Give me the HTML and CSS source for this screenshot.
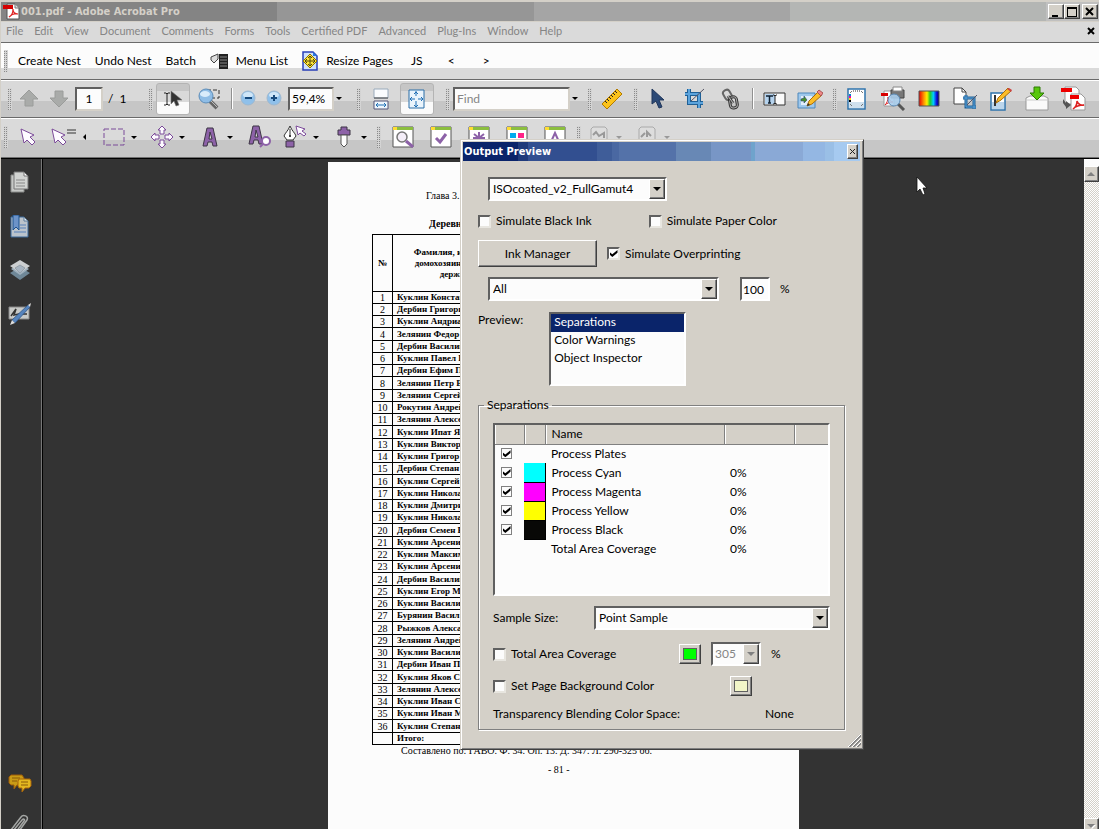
FILE: index.html
```html
<!DOCTYPE html>
<html lang="en">
<head>
  <meta charset="UTF-8">
  <title>001.pdf - Adobe Acrobat Pro</title>
  <meta name="viewport" content="width=device-width, initial-scale=1.0">
  <link rel="stylesheet" href="styles.css">
</head>
<body>
  <header class="titlebar">
    <svg class="app-icon" width="17" height="17" viewBox="0 0 17 17"><path d="M4 1h8l4 4v11H4z" fill="#fff" stroke="#555"/><path d="M12 1v4h4" fill="#ddd" stroke="#777"/><path d="M0 2h10v4H0z" fill="#d40000"/><path d="M6 14c2-1 4-4 4-8 0 3 2 5 5 5-3-1-6 0-9 3z" fill="none" stroke="#d22" stroke-width="1.2"/></svg>
    <h1>001.pdf - Adobe Acrobat Pro</h1>
    <div class="window-buttons">
      <button class="win-btn" aria-label="Minimize"><svg width="12" height="12"><path d="M2 9h6v2H2z"/></svg></button>
      <button class="win-btn" aria-label="Maximize"><svg width="12" height="12"><path d="M1 1h10v10H1z M2 3v7h8V3z" fill-rule="evenodd"/></svg></button>
      <button class="win-btn win-close" aria-label="Close"><svg width="12" height="12"><path d="M2 2l7 7M9 2l-7 7" stroke="#000" stroke-width="2"/></svg></button>
    </div>
  </header>

  <nav class="menubar">
    <a href="#">File</a>
    <a href="#">Edit</a>
    <a href="#">View</a>
    <a href="#">Document</a>
    <a href="#">Comments</a>
    <a href="#">Forms</a>
    <a href="#">Tools</a>
    <a href="#">Certified PDF</a>
    <a href="#">Advanced</a>
    <a href="#">Plug-Ins</a>
    <a href="#">Window</a>
    <a href="#">Help</a>
    <button class="doc-close" aria-label="Close document"><svg width="8" height="8"><path d="M1 1l6 6M7 1l-6 6" stroke="#000" stroke-width="2"/></svg></button>
  </nav>

  <div class="toolbar nest-bar">
    <span class="grip"></span>
    <button class="text-tool">Create Nest</button>
    <button class="text-tool">Undo Nest</button>
    <button class="text-tool">Batch</button>
    <button class="text-tool">
      <svg width="18" height="17"><path d="M1 4l7-3v5l-4 4-3-3z" fill="#ddd" stroke="#444"/><path d="M9 1h9v15H9z" fill="#222"/><path d="M10 4h7M10 7h7M10 10h7M10 13h7" stroke="#888"/></svg>
      Menu List
    </button>
    <button class="text-tool">
      <svg width="16" height="20"><path d="M1 1h10l4 4v14H1z" fill="#cfe0fa" stroke="#2a3fb8" stroke-width="1.5"/><path d="M11 1v4h4z" fill="#2b7de0"/><path d="M8 3l7 7-7 7-7-7z" fill="#ffe53a" stroke="#8a7400"/><path d="M8 5v10M3 10h10M6 7l2-2 2 2M6 13l2 2 2-2M5 8l-2 2 2 2M11 8l2 2-2 2" fill="none" stroke="#54480a"/></svg>
      Resize Pages
    </button>
    <button class="text-tool js-tool">JS</button>
    <button class="text-tool arrow-tool">&lt;</button>
    <button class="text-tool arrow-tool">&gt;</button>
  </div>

  <div class="toolbar main-bar">
    <div class="group">
      <span class="grip"></span>
      <button class="tool tool-nav" aria-label="Previous page"><svg width="20" height="19"><path d="M10 1l9 9h-5v7H6v-7H1z" fill="#a9aba9" stroke="#9a9c9a"/></svg></button>
      <button class="tool tool-nav" aria-label="Next page"><svg width="20" height="19"><path d="M10 18l9-9h-5V2H6v7H1z" fill="#a9aba9" stroke="#9a9c9a"/></svg></button>
      <input class="field page-field" type="text" value="1" aria-label="Page">
      <span class="page-count">/&nbsp; 1</span>
    </div>
    <div class="group">
      <span class="grip"></span>
      <button class="tool tool-on" aria-label="Select"><svg width="20" height="20"><path d="M1 4h2l1 1 1-1h2M4 5v10M1 16h2l1-1 1 1h2" fill="none" stroke="#222"/><path d="M8 2v13l3-3 2 5 3-1-2-5h5z" fill="#333" stroke="#777" stroke-width=".6"/></svg></button>
      <button class="tool" aria-label="Marquee zoom"><svg width="24" height="22"><path d="M10 2h12v8H10z" fill="none" stroke="#333" stroke-dasharray="4 2"/><path d="M13 13l7 7" stroke="#666" stroke-width="4"/><path d="M14 13l6 6" stroke="#bbb"/><circle cx="9" cy="8" r="7" fill="#8fbde6" stroke="#5d8dba"/><ellipse cx="8" cy="6" rx="5" ry="3" fill="#d9ecfb"/></svg></button>
      <span class="sep"></span>
      <button class="tool tool-small" aria-label="Zoom out"><svg width="17" height="17"><circle cx="8" cy="8" r="7" fill="#8fc0ea" stroke="#9db8d0"/><ellipse cx="8" cy="5" rx="5" ry="3" fill="#cfe6f8"/><path d="M5 7h7v2H5z" fill="#174a7d"/></svg></button>
      <button class="tool tool-small" aria-label="Zoom in"><svg width="17" height="17"><circle cx="8" cy="8" r="7" fill="#8fc0ea" stroke="#9db8d0"/><ellipse cx="8" cy="5" rx="5" ry="3" fill="#cfe6f8"/><path d="M5 7h2V5h2v2h2v2H9v2H7V9H5z" fill="#174a7d"/></svg></button>
      <input class="field zoom-field" type="text" value="59,4%" aria-label="Zoom">
      <button class="caret" aria-label="Zoom levels"></button>
    </div>
    <div class="group">
      <span class="grip"></span>
      <button class="tool" aria-label="Scrolling pages"><svg width="18" height="22"><path d="M2 1h14v9H2z" fill="#fafcfe" stroke="#9ab"/><path d="M2 10h14" stroke="#444"/><path d="M2 13h14v8H2z" fill="#eef6fd" stroke="#557"/><path d="M4 17h10M6 15l-2 2 2 2M12 15l2 2-2 2" fill="none" stroke="#1f6fb5"/></svg></button>
      <button class="tool tool-on" aria-label="One full page"><svg width="18" height="22"><path d="M1 2h15v18H1z" fill="#eaf4fc" stroke="#2b6ea8"/><path d="M8 3v5M8 13v6M2 11h5M10 11h5M6 6l2-2 2 2M6 17l2 2 2-2M4 9l-2 2 2 2M13 9l2 2-2 2" fill="none" stroke="#1f6fb5"/></svg></button>
    </div>
    <div class="group">
      <span class="grip"></span>
      <input class="field find-field" type="text" placeholder="Find" aria-label="Find">
      <button class="caret" aria-label="Find options"></button>
    </div>
    <div class="group">
      <span class="grip"></span>
      <button class="tool" aria-label="Measure"><svg width="22" height="22"><path d="M1 16L16 1l5 5L6 21z" fill="#fcc31b" stroke="#b27b00"/><path d="M4 13l2 2M6 11l2 2M8 9l2 2M10 7l2 2M12 5l2 2M14 3l2 2" stroke="#222"/></svg></button>
    </div>
    <div class="group">
      <span class="grip"></span>
      <button class="tool" aria-label="Select object"><svg width="14" height="21"><path d="M1 1v15l4-3 3 7 3-1-3-7h5z" fill="#2c4a77" stroke="#20365a"/></svg></button>
      <button class="tool" aria-label="Crop"><svg width="21" height="21"><path d="M5 1v14h14M1 6h14v14" fill="none" stroke="#1f6096" stroke-width="4"/><path d="M5 1v14h14M1 6h14v14" fill="none" stroke="#5ba3dc" stroke-width="2"/><path d="M7 13L20 1" stroke="#556"/></svg></button>
      <button class="tool" aria-label="Link"><svg width="18" height="22"><rect x="3" y="2" width="7" height="10" rx="3" transform="rotate(-30 6 7)" fill="none" stroke="#666" stroke-width="2"/><rect x="9" y="9" width="7" height="11" rx="3" transform="rotate(-10 12 15)" fill="none" stroke="#333" stroke-width="3"/><rect x="9" y="9" width="7" height="11" rx="3" transform="rotate(-10 12 15)" fill="none" stroke="#aaa"/><path d="M7 8l5 7" stroke="#444" stroke-width="3"/><path d="M7 8l5 7" stroke="#bbb"/></svg></button>
      <span class="sep"></span>
      <button class="tool" aria-label="Text field"><svg width="23" height="14"><path d="M1 1h21v12H1z" fill="#fafafa" stroke="#333"/><path d="M2 2h10v10H2z" fill="#b5d3ee"/><path d="M3 4h7M6.500 4v7M5 11h3" stroke="#123" stroke-width="1.500"/><path d="M10 3h1l1 1 1-1h1M12 4v7M10 12h1l1-1 1 1h1" fill="none" stroke="#222"/></svg></button>
      <button class="tool" aria-label="Edit picture"><svg width="26" height="20"><path d="M1 4h17v15H1z" fill="#9fc8ec" stroke="#4c87bb"/><path d="M4 7h11v9H4z" fill="#e3eefa"/><path d="M4 10l3-1v-2l3 4-3 3v-2H4z" fill="#4a8f28" stroke="#2c4a77" stroke-width=".6"/><path d="M10 17l2-5L21 3l4 3-10 9z" fill="#fbbd28" stroke="#a96c0a"/><path d="M20 3l2-2 4 3-2 3z" fill="#e88" stroke="#a55"/><path d="M10 17l1-3 2 2z" fill="#333"/></svg></button>
    </div>
    <div class="group">
      <span class="grip"></span>
      <button class="tool" aria-label="Printer marks"><svg width="20" height="22"><path d="M1 1h17v20H1z" fill="#fff" stroke="#2f74ad" stroke-width="1.500"/><path d="M2 14h15v6H2z" fill="#cfe0ee"/><path d="M6 3h7" stroke="#333" stroke-dasharray="1 1"/><path d="M3 5l2-2M14 3l2 2M3 16l2 2M16 16l-2 2" stroke="#777"/><path d="M2 6h2v2H2z" fill="#08c"/><path d="M2 8h2v2H2z" fill="#e0a"/><path d="M2 10h2v2H2z" fill="#fd0"/><path d="M2 12h2v2H2z"/></svg></button>
      <button class="tool" aria-label="Print production"><svg width="26" height="25"><path d="M4 5h10v15H4z" fill="#fff" stroke="#999"/><path d="M11 4h13v8H11z" fill="#777" stroke="#444"/><path d="M13 1h9v4h-9z" fill="#fff" stroke="#888"/><path d="M1 7h7v3H1z" fill="#d80000"/><path d="M5 19c2-2 3-5 3-8 1 3 3 5 5 5-3 0-6 1-8 3z" fill="none" stroke="#d22"/><path d="M18 18l6 6" stroke="#555" stroke-width="3"/><circle cx="14" cy="14" r="6" fill="#a8cdec" fill-opacity=".9" stroke="#5c8ab5"/></svg></button>
      <button class="tool" aria-label="Output preview"><svg width="23" height="17"><defs><linearGradient id="spectrum"><stop offset="0" stop-color="#e00"/><stop offset=".25" stop-color="#f90"/><stop offset=".4" stop-color="#fe0"/><stop offset=".55" stop-color="#2c2"/><stop offset=".72" stop-color="#0cf"/><stop offset=".88" stop-color="#11d"/><stop offset="1" stop-color="#006"/></linearGradient></defs><path d="M1 1h20v15H1z" fill="url(#spectrum)" stroke="#555"/></svg></button>
      <button class="tool" aria-label="Crop pages"><svg width="25" height="24"><path d="M1 1h8l4 4v12H1z" fill="#fff" stroke="#444"/><path d="M9 1v4h4" fill="none" stroke="#444"/><path d="M13 8v12h10M10 11h11v11" fill="none" stroke="#1f6096" stroke-width="3"/><path d="M13 8v12h10M10 11h11v11" fill="none" stroke="#5ba3dc"/><path d="M14 18L24 8" stroke="#556"/></svg></button>
      <button class="tool" aria-label="Fix hairlines"><svg width="23" height="24"><path d="M1 6h14v17H1z" fill="#fff" stroke="#2f74ad" stroke-width="1.500"/><path d="M2 15h12v7H2z" fill="#bcd6ec"/><path d="M5 8v11" stroke="#333" stroke-width="2"/><path d="M6 16l2-5L18 1l3 3-10 9z" fill="#fbbd28" stroke="#a96c0a"/><path d="M17 2l2-1 3 2-1 2z" fill="#c44"/></svg></button>
      <button class="tool" aria-label="Export"><svg width="24" height="25"><path d="M1 12l4-2h14l4 2v12H1z" fill="#fafafa" stroke="#999"/><path d="M2 14h20" stroke="#ccc"/><path d="M9 1h6v6h4l-7 7-7-7h4z" fill="#58c70d" stroke="#2c7a04"/></svg></button>
      <button class="tool" aria-label="Convert"><svg width="25" height="25"><path d="M4 1h11l3 3v14H4z" fill="#fff" stroke="#999"/><path d="M10 8h10l4 4v12H10z" fill="#fff" stroke="#999"/><path d="M0 2h11v4H0z" fill="#e00"/><path d="M9 9h9v4H9z" fill="#e00"/><path d="M12 23c3-2 4-5 4-8 1 3 4 5 7 4-4 0-8 1-11 4z" fill="none" stroke="#d22" stroke-width="1.500"/><path d="M2 13v4l3 4v2l5-4-5-4v2z" fill="#555"/></svg></button>
    </div>
  </div>

  <div class="toolbar edit-bar">
    <div class="group">
      <span class="grip"></span>
      <button class="tool" aria-label="Selection"><svg width="18" height="18"><path d="M2 1l3 14 3-3 5 5 3-3-5-5 4-2z" fill="#fdfbff" stroke="#7b4a99"/></svg></button>
      <button class="tool" aria-label="Similar objects"><svg width="26" height="18"><path d="M1 1l3 14 3-3 5 5 3-3-5-5 4-2z" fill="#fdfbff" stroke="#7b4a99"/><path d="M16 2h9M16 5h9" stroke="#333"/></svg></button>
      <button class="caret caret-left" aria-label="Previous tool"></button>
    </div>
    <div class="group">
      <button class="tool" aria-label="Frame"><svg width="22" height="18"><path d="M1 1h20v16H1z" fill="none" stroke="#7b4a99" stroke-dasharray="5 2"/></svg></button>
      <button class="caret" aria-label="Frame options"></button>
      <button class="tool" aria-label="Move"><svg width="24" height="24"><path d="M12 1l4 4h-2v4h-4V5H8zM12 23l4-4h-2v-4h-4v4H8zM1 12l4-4v2h4v4H5v2zM23 12l-4-4v2h-4v4h4v2z" fill="#fdfbff" stroke="#7b4a99"/></svg></button>
      <button class="caret" aria-label="Move options"></button>
      <button class="tool" aria-label="Text edit"><svg width="16" height="20"><path d="M5 1h6l4 18h-4l-1-4H6l-1 4H1zM7 12h3L8 5z" fill="#8d62a8" stroke="#3d3545" fill-rule="evenodd"/></svg></button>
      <button class="caret" aria-label="Text options"></button>
      <button class="tool tool-wide" aria-label="Text search"><svg width="24" height="24"><path d="M5 1h6l4 18h-4l-1-4H6l-1 4H1zM7 12h3L8 5z" fill="#8d62a8" stroke="#3d3545" fill-rule="evenodd"/><circle cx="18" cy="16" r="4" fill="#fff" stroke="#8d62a8" stroke-width="2"/><path d="M15 19l-3 3" stroke="#8d62a8" stroke-width="2"/></svg></button>
      <button class="tool" aria-label="Path edit"><svg width="26" height="24"><path d="M7 1c-2 5-5 7-6 10l3 4h6l3-4C12 8 9 6 7 1z" fill="#fff" stroke="#333"/><path d="M7 4v6" stroke="#333"/><circle cx="7" cy="11" r="1"/><path d="M3 16h8v6H3z" fill="#8d62a8" stroke="#3d3545"/><path d="M13 1l2 9 2-2 4 3 2-2-4-3 3-2z" fill="#fdfbff" stroke="#7b4a99"/></svg></button>
      <button class="caret" aria-label="Path options"></button>
      <button class="tool" aria-label="Pipette"><svg width="15" height="22"><path d="M4 1h6v3h3v5H1V4h3z" fill="#8d62a8" stroke="#3d3545"/><path d="M4 9h6v9l-3 3-3-3z" fill="#fdfdfd" stroke="#555"/></svg></button>
      <button class="caret" aria-label="Pipette options"></button>
    </div>
    <div class="group panel-tools">
      <span class="grip"></span>
      <button class="tool" aria-label="Inspect"><svg width="22" height="22"><path d="M1 1h20v20H1z" fill="#fff" stroke="#555"/><path d="M1 1h20v3H1z" fill="#8cbf3f"/><path d="M1 1h4v3H1z" fill="#fd3"/><circle cx="10" cy="11" r="5" fill="#f4eef8" stroke="#777" stroke-width="1.500"/><path d="M14 15l7 6" stroke="#8d62a8" stroke-width="3"/></svg></button>
      <button class="tool" aria-label="Preflight"><svg width="22" height="22"><path d="M1 1h20v20H1z" fill="#fff" stroke="#555"/><path d="M1 1h20v3H1z" fill="#8cbf3f"/><path d="M1 1h4v3H1z" fill="#fd3"/><path d="M6 12l4 4 6-8" fill="none" stroke="#8d62a8" stroke-width="3"/></svg></button>
      <button class="tool" aria-label="Action list"><svg width="22" height="22"><path d="M1 1h20v20H1z" fill="#fff" stroke="#555"/><path d="M1 1h20v3H1z" fill="#8cbf3f"/><path d="M1 1h4v3H1z" fill="#fd3"/><path d="M11 6v12M6 8l10 8M16 8L6 16M5 12h12" stroke="#8d62a8" stroke-width="2"/></svg></button>
      <button class="tool" aria-label="Color"><svg width="22" height="22"><path d="M1 1h20v20H1z" fill="#fff" stroke="#555"/><path d="M1 1h20v3H1z" fill="#8cbf3f"/><path d="M1 1h4v3H1z" fill="#fd3"/><path d="M4 7h6v5H4z" fill="#0ae"/><path d="M12 7h6v5h-6z" fill="#f28"/><path d="M4 13h6v5H4z" fill="#fd0"/><path d="M12 13h6v5h-6z"/></svg></button>
      <button class="tool" aria-label="Fonts"><svg width="22" height="22"><path d="M1 1h20v20H1z" fill="#fff" stroke="#555"/><path d="M1 1h20v3H1z" fill="#8cbf3f"/><path d="M1 1h4v3H1z" fill="#fd3"/><path d="M6 18l5-11 5 11M8 14h6" fill="none" stroke="#8d62a8" stroke-width="2"/></svg></button>
    </div>
    <div class="group disabled-tools">
      <span class="grip"></span>
      <button class="tool" aria-label="Stamp"><svg width="18" height="22"><path d="M1 3l2-2h12l2 2v18H1z" fill="#ddd" stroke="#aaa"/><path d="M3 9l3-3 3 4 5-3v5" fill="none" stroke="#999" stroke-width="2"/></svg></button>
      <button class="caret" aria-label="Stamp options"></button>
      <button class="tool" aria-label="Note"><svg width="18" height="22"><path d="M1 3l2-2h12l2 2v18H1z" fill="#ddd" stroke="#aaa"/><path d="M3 11l4-4M9 11V6l4 4" fill="none" stroke="#999" stroke-width="2"/></svg></button>
      <button class="caret" aria-label="Note options"></button>
    </div>
  </div>

  <main class="viewer">
    <aside class="sidebar">
      <button class="side-btn" aria-label="Pages"><svg width="20" height="23"><path d="M1 4h13v17H1z" fill="#c6c8c6" stroke="#8a8c8a"/><path d="M4 1h10l4 4v13H4z" fill="#d2d4d2" stroke="#777"/><path d="M14 1v4h4z" fill="#fff" stroke="#777"/><path d="M6 9h9M6 12h9M6 15h9" stroke="#888"/></svg></button>
      <button class="side-btn" aria-label="Bookmarks"><svg width="20" height="23"><path d="M1 2h13l4 4v16H1z" fill="#bcc4cc" stroke="#3a689a"/><path d="M14 2v4h4z" fill="#e8eef4" stroke="#5a7a9a"/><path d="M10 10h6M10 13h6M4 17h12" stroke="#5681bb"/><path d="M3 0h6v15l-3-3-3 3z" fill="#6c93c8" stroke="#1d528e"/></svg></button>
      <button class="side-btn" aria-label="Layers"><svg width="20" height="22"><path d="M10 8l10 6-10 7L0 14z" fill="#6f8797"/><path d="M10 4l9 6-9 6-9-6z" fill="#9fb0bd"/><path d="M10 1l10 6-10 7L0 7z" fill="#cdd0d2"/><path d="M5 9l5-3 5 3-5 5z" fill="#a8b5c2" stroke="#808b96" stroke-width=".6"/></svg></button>
      <button class="side-btn" aria-label="Signatures"><svg width="24" height="23"><path d="M1 4h20v12H1z" fill="#c8cac8" stroke="#888"/><path d="M3 13l5-7-2 6 5-1h8" fill="none" stroke="#333" stroke-width="1.500"/><path d="M4 17L20 2l2 2L7 20z" fill="#5684bd" stroke="#2f5688" stroke-width=".8"/><path d="M4 17l-2 5 5-2zM20 2l3-2-1 4z" fill="#ddd"/></svg></button>
      <button class="side-btn side-comments" aria-label="Comments"><svg width="24" height="20"><path d="M3 1h11l2 3v5l-2 2H9l-3 4v-4H3L1 9V3z" fill="#c99b16" stroke="#9c5b08"/><path d="M4 4h8M4 7h5" stroke="#8a5a08"/><path d="M11 5h11l1 2v5l-2 2h-4l-3 4v-4h-3l-1-2V7z" fill="#e3b820" stroke="#a8640a"/><path d="M13 8h7M13 11h7" stroke="#8a5a08"/></svg></button>
      <button class="side-btn" aria-label="Attachments"><svg width="22" height="24"><path d="M2 17L12 4c2-3 8-1 6 3L8 21c-2 2-6 0-4-3L13 7c2-2 3 0 2 1l-8 11" fill="none" stroke="#a5a7a5" stroke-width="1.500"/></svg></button>
    </aside>

    <div class="canvas">
      <article class="page" lang="ru">
        <p class="chapter">Глава 3.</p>
        <p class="village">Деревня</p>
        <table class="census">
          <thead>
            <tr><th class="num">№</th><th class="name">Фамилия, имя отчество<br>домохозяина (домохозя-<br>держателя)</th><th></th></tr>
          </thead>
          <tbody>
            <tr><td>1</td><td>Куклин Констан</td><td></td></tr>
            <tr><td>2</td><td>Дербин Григори</td><td></td></tr>
            <tr><td>3</td><td>Куклин Андриа</td><td></td></tr>
            <tr><td>4</td><td>Зелянин Федор</td><td></td></tr>
            <tr><td>5</td><td>Дербин Василий</td><td></td></tr>
            <tr><td>6</td><td>Куклин Павел И</td><td></td></tr>
            <tr><td>7</td><td>Дербин Ефим П</td><td></td></tr>
            <tr><td>8</td><td>Зелянин Петр В</td><td></td></tr>
            <tr><td>9</td><td>Зелянин Сергей</td><td></td></tr>
            <tr><td>10</td><td>Рокутин Андрей</td><td></td></tr>
            <tr><td>11</td><td>Зелянин Алексе</td><td></td></tr>
            <tr><td>12</td><td>Куклин Ипат Я</td><td></td></tr>
            <tr><td>13</td><td>Куклин Виктор</td><td></td></tr>
            <tr><td>14</td><td>Куклин Григор</td><td></td></tr>
            <tr><td>15</td><td>Дербин Степан</td><td></td></tr>
            <tr><td>16</td><td>Куклин Сергей</td><td></td></tr>
            <tr><td>17</td><td>Куклин Никола</td><td></td></tr>
            <tr><td>18</td><td>Куклин Дмитри</td><td></td></tr>
            <tr><td>19</td><td>Куклин Никола</td><td></td></tr>
            <tr><td>20</td><td>Дербин Семен В</td><td></td></tr>
            <tr><td>21</td><td>Куклин Арсени</td><td></td></tr>
            <tr><td>22</td><td>Куклин Максим</td><td></td></tr>
            <tr><td>23</td><td>Куклин Арсени</td><td></td></tr>
            <tr><td>24</td><td>Дербин Василий</td><td></td></tr>
            <tr><td>25</td><td>Куклин Егор М</td><td></td></tr>
            <tr><td>26</td><td>Куклин Васили</td><td></td></tr>
            <tr><td>27</td><td>Бурянин Васил</td><td></td></tr>
            <tr><td>28</td><td>Рыжков Алекса</td><td></td></tr>
            <tr><td>29</td><td>Зелянин Андрей</td><td></td></tr>
            <tr><td>30</td><td>Куклин Васили</td><td></td></tr>
            <tr><td>31</td><td>Дербин Иван П</td><td></td></tr>
            <tr><td>32</td><td>Куклин Яков С</td><td></td></tr>
            <tr><td>33</td><td>Зелянин Алексе</td><td></td></tr>
            <tr><td>34</td><td>Куклин Иван С</td><td></td></tr>
            <tr><td>35</td><td>Куклин Иван М</td><td></td></tr>
            <tr><td>36</td><td>Куклин Степан</td><td></td></tr>
            <tr><td></td><td>Итого:</td><td></td></tr>
          </tbody>
        </table>
        <p class="source">Составлено по: ГАВО. Ф. 34. Оп. 13. Д. 347. Л. 290-325 об.</p>
        <p class="folio">- 81 -</p>
      </article>
    </div>

    <div class="scrollbar">
      <button class="scroll-btn" aria-label="Scroll up"><svg width="9" height="6"><path d="M0 5l4-4 4 4z" fill="#808080"/></svg></button>
      <div class="track"></div>
      <button class="scroll-btn" aria-label="Scroll down"><svg width="9" height="6"><path d="M1 2h8L5 6z" fill="#fff"/><path d="M0 1h8L4 5z" fill="#808080"/></svg></button>
    </div>
  </main>

  <section class="dialog">
    <div class="dialog-title">
      <h2>Output Preview</h2>
      <button class="dialog-close" aria-label="Close"><svg width="7" height="7"><path d="M1 1l5 5M6 1l-5 5" stroke="#222"/></svg></button>
    </div>
    <form class="dialog-body">
      <span class="combo profile"><select aria-label="Simulation profile"><option>ISOcoated_v2_FullGamut4</option></select></span>
      <div class="row checks">
        <label><input type="checkbox"> Simulate Black Ink</label>
        <label><input type="checkbox"> Simulate Paper Color</label>
      </div>
      <div class="row ink-row">
        <button type="button" class="push">Ink Manager</button>
        <label><input type="checkbox" checked> Simulate Overprinting</label>
      </div>
      <div class="row show-row">
        <span class="combo show"><select aria-label="Show"><option>All</option></select></span>
        <input class="field opacity" id="opacity" type="text" value="100">
        <label for="opacity">%</label>
      </div>
      <div class="row preview-row">
        <label for="preview">Preview:</label>
        <select id="preview" class="listbox" size="4">
          <option selected>Separations</option>
          <option>Color Warnings</option>
          <option>Object Inspector</option>
        </select>
      </div>

      <fieldset>
        <legend>Separations</legend>
        <div class="plates">
          <table>
            <colgroup><col class="col-check"><col class="col-ink"><col class="col-name"><col class="col-value"><col></colgroup>
            <thead>
              <tr><th></th><th></th><th>Name</th><th></th><th></th></tr>
            </thead>
            <tbody>
              <tr><td><input type="checkbox" checked aria-label="Process Plates"></td><td></td><td>Process Plates</td><td></td><td></td></tr>
              <tr><td><input type="checkbox" checked aria-label="Process Cyan"></td><td class="ink cyan"></td><td>Process Cyan</td><td>0%</td><td></td></tr>
              <tr><td><input type="checkbox" checked aria-label="Process Magenta"></td><td class="ink magenta"></td><td>Process Magenta</td><td>0%</td><td></td></tr>
              <tr><td><input type="checkbox" checked aria-label="Process Yellow"></td><td class="ink yellow"></td><td>Process Yellow</td><td>0%</td><td></td></tr>
              <tr><td><input type="checkbox" checked aria-label="Process Black"></td><td class="ink black"></td><td>Process Black</td><td>0%</td><td></td></tr>
              <tr><td></td><td></td><td>Total Area Coverage</td><td>0%</td><td></td></tr>
            </tbody>
          </table>
        </div>
        <div class="row sample-row">
          <label for="sample">Sample Size:</label>
          <span class="combo"><select id="sample"><option>Point Sample</option></select></span>
        </div>
        <div class="row coverage-row">
          <label><input type="checkbox"> Total Area Coverage</label>
          <button type="button" class="swatch swatch-green" aria-label="Warning color"></button>
          <span class="combo limit"><select id="limit" disabled><option>305</option></select></span>
          <label for="limit">%</label>
        </div>
        <div class="row background-row">
          <label><input type="checkbox"> Set Page Background Color</label>
          <button type="button" class="swatch swatch-cream" aria-label="Background color"></button>
        </div>
        <div class="row blend-row">
          <span>Transparency Blending Color Space:</span>
          <span>None</span>
        </div>
      </fieldset>
    </form>
    <svg class="resize-grip" width="13" height="13"><path d="M1 13L13 1M5 13l8-8M9 13l4-4" stroke="#808080" stroke-width="2"/><path d="M0 13L13 0M4 13l9-9M8 13l5-5" stroke="#fff"/></svg>
  </section>

  <svg class="pointer" width="12" height="20"><path d="M1 1v15l3-3 3 6 2-1-2-6h4z" fill="#fff" stroke="#111" stroke-width=".8"/></svg>
</body>
</html>
```
FILE: styles.css
```css
*,
*::before,
*::after {
  box-sizing: border-box;
}

body {
  margin: 0;
  height: 100vh;
  display: flex;
  flex-direction: column;
  overflow: hidden;
  border-top: 2px solid #d4d0c8;
  border-left: 1px solid #d4d0c8;
  font: 12px/16px Lato, sans-serif;
  color: #000;
  background: #d4d0c8;
}

button,
input,
select {
  font: inherit;
  color: inherit;
  border-radius: 0;
}

button {
  padding: 0;
  border: 0;
  background: none;
}

svg {
  flex: none;
  display: block;
}

/* title bar */
.titlebar {
  display: flex;
  align-items: center;
  height: 19px;
  padding: 0 1px 0 2px;
  background: linear-gradient(to right, #848484 276px, #969696 276px 533px, #a5a5a5 533px 789px, #b4b6b4 789px 1045px, #c0c0c0 1045px);
}

.titlebar h1,
.dialog-title h2 {
  margin: 0;
  font: bold 11px/19px "DejaVu Sans Condensed", "DejaVu Sans", sans-serif;
  color: #fff;
}

.titlebar h1 {
  flex: 1;
  margin-left: 1px;
  color: #d4d0c8;
}

.window-buttons {
  display: flex;
}

.win-btn,
.dialog-close,
.scroll-btn,
.push,
.swatch {
  display: flex;
  align-items: center;
  justify-content: center;
  background: #d4d0c8;
  border: 1px solid;
  border-color: #fff #404040 #404040 #fff;
  box-shadow: inset -1px -1px 0 #808080;
}

.win-btn {
  width: 16px;
  height: 15px;
}

.win-close {
  margin-left: 2px;
}

/* menu */
.menubar {
  display: flex;
  align-items: center;
  gap: 11px;
  height: 20px;
  padding: 0 4px 2px 5px;
  margin-top: 1px;
  background: #dadada;
  font-size: 11px;
}

.menubar a {
  color: #858585;
  text-decoration: none;
}

.doc-close {
  margin-left: auto;
}

/* toolbars */
.toolbar {
  display: flex;
  align-items: center;
  border-top: 1px solid #6a6a6a;
}

.nest-bar {
  gap: 14px;
  height: 37px;
  padding-left: 3px;
  background: linear-gradient(#fcfcfc 25px, #dadada 25px);
}

.grip {
  flex: none;
  width: 4px;
  height: 22px;
  margin-right: 1px;
  background:
    repeating-linear-gradient(#d4d4d4 0 1px, transparent 1px 2px),
    repeating-linear-gradient(to right, #8a8a8a 0 1px, #d4d4d4 1px 2px);
}

.nest-bar .grip {
  margin-right: -4px;
}

.text-tool {
  display: flex;
  align-items: center;
  gap: 8px;
}

.js-tool {
  margin: 0 4px;
}

.arrow-tool {
  width: 21px;
  justify-content: center;
}

.main-bar {
  display: grid;
  grid-template-columns: 141px 208px 89px 142px 46px 199px 1fr;
  height: 38px;
  padding-left: 7px;
  background: linear-gradient(#fff 1px, #d9d9d9 1px 21px, #c6c6c6 21px);
}

.edit-bar {
  display: grid;
  grid-template-columns: 93px 280px 200px 1fr;
  height: 41px;
  padding: 0 0 1px 3px;
  background: linear-gradient(#fff 1px, #dadada 1px 22px, #c6c6c6 22px);
  border-bottom: 1px solid #707070;
}

.group {
  display: flex;
  align-items: center;
  gap: 2px;
  min-width: 0;
}

.edit-bar .group + .group {
  gap: 0;
}

.edit-bar .panel-tools.group {
  gap: 4px;
}

.tool {
  flex: none;
  display: flex;
  align-items: center;
  justify-content: center;
  width: 34px;
  height: 32px;
}

.tool-nav {
  width: 28px;
}

.tool-small {
  width: 24px;
}

.tool-wide {
  width: 38px;
}

.tool-on {
  border: 1px solid #b4b4b4;
  border-radius: 3px;
  background: linear-gradient(#c6c6c6 7px, #d9d9d9 7px 18px, #fafafa 18px);
}

.sep {
  width: 2px;
  height: 21px;
  margin: 0 1px 0 3px;
  background: linear-gradient(to right, #909090 1px, #fff 1px);
}

.caret {
  flex: none;
  width: 14px;
  height: 14px;
}

.caret::before {
  content: "";
  display: block;
  width: 6px;
  border: 3px solid transparent;
  border-top-color: #000;
  border-bottom: 0;
}

.caret-left::before {
  width: 3px;
  border: 3px solid transparent;
  border-right: 3px solid #000;
  border-left: 0;
}

.disabled-tools .caret::before {
  border-top-color: #999;
}

.field {
  min-width: 0;
  height: 24px;
  padding: 0 2px;
  background: #fcfcfc;
  border: 2px solid;
  border-color: #606060 #d4d0c8 #d4d0c8 #606060;
}

.page-field {
  width: 28px;
  text-align: center;
}

.zoom-field {
  width: 46px;
}

.find-field {
  width: 117px;
}

.field::placeholder {
  color: #858585;
}

.page-count {
  margin-left: 3px;
}

/* viewer */
.viewer {
  flex: 1;
  min-height: 0;
  display: flex;
  background: #333;
  border-top: 1px solid #000;
}

.sidebar {
  flex: none;
  display: flex;
  flex-direction: column;
  gap: 20px;
  width: 42px;
  padding: 11px 3px 0 0;
  border-right: 1px solid #000;
  box-shadow: inset -1px 0 0 #777;
}

.side-btn {
  display: flex;
  align-items: center;
  justify-content: center;
  flex: none;
  height: 24px;
}

.side-comments {
  margin-top: auto;
}

.side-btn:last-child {
  margin: -3px 0 -8px;
}

.canvas {
  flex: 1;
  overflow: hidden;
  padding-top: 3px;
}

.page {
  width: 471px;
  height: 100%;
  margin: 0 auto;
  padding: 28px 44px 0;
  background: #fcfcfc;
  font: 10px/12px "Liberation Serif", serif;
  white-space: nowrap;
}

.page p {
  margin: 0;
}

.chapter {
  padding-left: 54px;
}

.page .village {
  margin: 16px 0 4px;
  padding-left: 57px;
  font-weight: bold;
}

.census {
  width: 100%;
  border-collapse: collapse;
  table-layout: fixed;
}

.census th,
.census td {
  padding: 0 4px;
  border: 1px solid #000;
  font-size: 9px;
  line-height: 11px;
  font-weight: bold;
  text-align: left;
}

.census th {
  height: 57px;
  text-align: center;
}

.census .name {
  width: 140px;
}

.census .num {
  width: 20px;
  padding: 0;
}

.census td:first-child {
  padding: 0;
  font-size: 10px;
  font-weight: normal;
  text-align: center;
}

.census tbody tr {
  height: 12px;
}

.census tbody tr:nth-child(4n) {
  height: 13px;
}

.source {
  padding-left: 29px;
}

.page .folio {
  margin-top: 7px;
  padding-left: 176px;
}

.scrollbar {
  flex: none;
  display: flex;
  flex-direction: column;
  width: 15px;
  padding-top: 7px;
  background: #fcfcfc;
}

.scroll-btn {
  flex: none;
  height: 16px;
}

.scroll-btn:last-child {
  margin-bottom: -5px;
}

.track {
  flex: 1;
  background: repeating-conic-gradient(#d4d0c8 0 25%, #fff 0 50%) 0 0 / 2px 2px;
}

/* dialog */
.dialog {
  position: absolute;
  left: 460px;
  top: 139px;
  width: 404px;
  padding: 1px;
  background: #d4d0c8;
  border: 1px solid;
  border-color: #d4d0c8 #404040 #404040 #d4d0c8;
  box-shadow: inset 1px 1px 0 #fff, inset -1px -1px 0 #808080;
}

.dialog-title {
  display: flex;
  align-items: center;
  justify-content: space-between;
  height: 19px;
  margin: 1px 2px 1px 1px;
  padding: 0 2px 0 1px;
  background: linear-gradient(to right, #0a246a 55px, #1f3a7a 55px 65px, #324f90 65px 134px, #3f5d99 134px 149px, #4a68a2 149px 156px, #5472a9 156px 213px, #6888b5 213px 248px, #7896c6 248px 288px, #6fa3cc 288px 292px, #8aa9d6 292px 340px, #94b7e3 340px 362px, #9abfe6 362px 371px, #a6caf0 371px);
}

.dialog-close {
  width: 11px;
  height: 15px;
}

.dialog-body {
  display: flex;
  flex-direction: column;
  padding: 15px 17px 18px 16px;
}

.row,
.row label {
  display: flex;
  align-items: center;
}

.row label:has(input) {
  gap: 5px;
}

.combo {
  position: relative;
  display: block;
}

.combo select,
.listbox {
  display: block;
  width: 100%;
  height: 24px;
  padding: 0 3px;
  appearance: none;
  background: #fcfcfc;
  border: 2px solid;
  border-color: #606060 #fff #fff #606060;
  outline: 0;
}

.combo select:disabled {
  color: #858585;
  opacity: 1;
  padding: 0 2px;
}

.combo::before {
  content: "";
  position: absolute;
  right: 2px;
  top: 2px;
  width: 16px;
  height: 20px;
  background: #d4d0c8;
  border: 1px solid;
  border-color: #fff #404040 #404040 #fff;
  box-shadow: inset -1px -1px 0 #808080;
  pointer-events: none;
}

.combo::after {
  content: "";
  position: absolute;
  right: 6px;
  top: 10px;
  border: 4px solid transparent;
  border-top-color: #000;
  border-bottom: 0;
  pointer-events: none;
}

.limit::after {
  border-top-color: #808080;
}

input[type="checkbox"] {
  flex: none;
  appearance: none;
  display: grid;
  place-items: center;
  width: 13px;
  height: 13px;
  margin: 0;
  background: #fcfcfc;
  border: 2px solid;
  border-color: #606060 #e8e6e0 #e8e6e0 #606060;
}

input[type="checkbox"]:checked::before {
  content: "";
  width: 8px;
  height: 7px;
  background: #000;
  clip-path: polygon(0 30%, 35% 60%, 100% 0, 100% 40%, 35% 100%, 0 65%);
}

.profile {
  width: 179px;
  margin-left: 10px;
}

.checks {
  gap: 57px;
  margin-top: 12px;
}

.ink-row {
  gap: 10px;
  margin-top: 11px;
}

.push {
  width: 119px;
  height: 27px;
}

.show-row {
  margin: 10px 0 0 10px;
}

.show {
  width: 231px;
  margin-right: 21px;
}

.opacity {
  width: 30px;
  margin-right: 10px;
  padding: 0 1px;
  border-color: #606060 #fff #fff #606060;
}

.row.preview-row {
  align-items: flex-start;
  gap: 26px;
  margin-top: 11px;
}

.listbox {
  width: 137px;
  height: 74px;
  padding: 0;
  overflow: hidden;
}

.listbox option {
  height: 18px;
  min-height: 18px;
  padding: 0 3px;
  line-height: 18px;
}

.listbox option:checked {
  color: #fff;
  background: #0a246a linear-gradient(#0a246a, #0a246a);
  -webkit-text-fill-color: #fff;
}

fieldset {
  min-width: 0;
  margin: 11px 0 0;
  padding: 10px 14px 7px;
  border: 1px solid #808080;
  box-shadow: inset 1px 1px 0 #fff, 1px 1px 0 #fff;
}

legend {
  margin-left: -9px;
  padding: 0 3px;
}

.plates {
  height: 173px;
  background: #fcfcfc;
  border: 2px solid;
  border-color: #606060 #fff #fff #606060;
}

.plates table {
  width: 100%;
  border-collapse: collapse;
  table-layout: fixed;
}

.plates th {
  height: 19px;
  padding: 0 6px;
  background: #d4d0c8;
  border-right: 1px solid #808080;
  border-bottom: 1px solid #808080;
  box-shadow: inset 1px 0 0 #fff;
  font-weight: normal;
  text-align: left;
}

.plates th:last-child {
  border-right: 0;
}

.plates td {
  height: 19px;
  padding: 0 6px;
}

.col-check {
  width: 29px;
}

.col-ink {
  width: 21px;
}

.col-name {
  width: 179px;
}

.col-value {
  width: 70px;
}

.plates input[type="checkbox"] {
  width: 11px;
  height: 11px;
  border: 1px solid #808080;
}

.ink {
  border-right: 1px solid #000;
  border-bottom: 1px solid #000;
}

.cyan {
  background: #0ff;
}

.magenta {
  background: #f0f;
}

.yellow {
  background: #ff0;
}

.black {
  background: #080806;
}

.sample-row {
  justify-content: space-between;
  margin-top: 10px;
}

.sample-row .combo {
  width: 236px;
}

.coverage-row {
  margin-top: 12px;
}

.coverage-row label:first-child {
  width: 186px;
}

.swatch {
  width: 22px;
  height: 20px;
}

.swatch::before {
  content: "";
  width: 14px;
  height: 12px;
  border: 1px solid #606060;
}

.swatch-green::before {
  background: #0f0;
}

.swatch-cream::before {
  background: #f2f5c8;
}

.limit {
  width: 50px;
  margin: 0 10px;
}

.background-row {
  margin-top: 10px;
}

.background-row label {
  width: 237px;
}

.blend-row {
  margin-top: 10px;
}

.blend-row span:first-child {
  width: 272px;
}

.resize-grip {
  position: absolute;
  right: 2px;
  bottom: 2px;
}

.pointer {
  position: absolute;
  left: 916px;
  top: 176px;
}
```
